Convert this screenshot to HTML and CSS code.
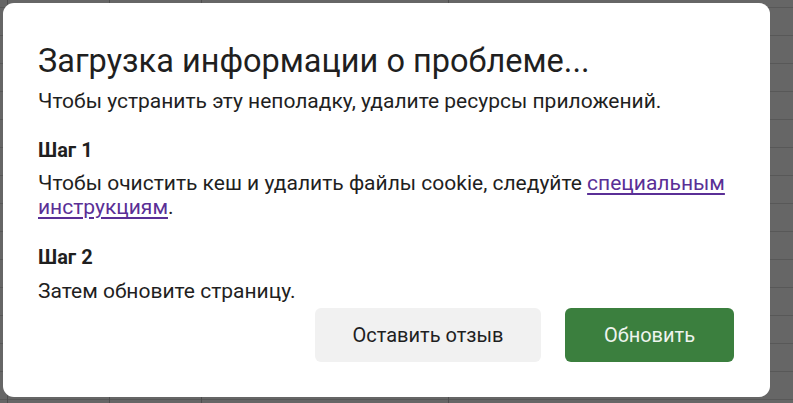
FILE: index.html
```html
<!DOCTYPE html>
<html lang="ru">
<head>
<meta charset="utf-8">
<title>Загрузка информации о проблеме</title>
<link rel="stylesheet" href="styles.css">
</head>
<body>
<div class="dialog">
  <h1 class="title">Загрузка информации о проблеме...</h1>
  <p class="lead">Чтобы устранить эту неполадку, удалите ресурсы приложений.</p>
  <h2 class="step">Шаг 1</h2>
  <p class="text">Чтобы очистить кеш и удалить файлы cookie, следуйте <a class="link" href="#">специальным инструкциям</a>.</p>
  <h2 class="step">Шаг 2</h2>
  <p class="text">Затем обновите страницу.</p>
  <div class="actions">
    <button class="btn btn-secondary">Оставить отзыв</button>
    <button class="btn btn-primary">Обновить</button>
  </div>
</div>
</body>
</html>
```
FILE: styles.css
```css
html, body {
  margin: 0;
  padding: 0;
}
body {
  width: 793px;
  height: 403px;
  overflow: hidden;
  background-color: #666666;
  background-image:
    linear-gradient(90deg, transparent 7px, #4e4e4e 7px, #4e4e4e 8px, transparent 8px),
    linear-gradient(90deg, transparent 109px, #4e4e4e 109px, #4e4e4e 110px, transparent 110px),
    linear-gradient(90deg, transparent 201px, #4e4e4e 201px, #4e4e4e 202px, transparent 202px),
    linear-gradient(90deg, transparent 448px, #4e4e4e 448px, #4e4e4e 449px, transparent 449px),
    repeating-linear-gradient(180deg, transparent 0, transparent 7px, #585858 7px, #585858 8px, transparent 8px, transparent 28px);
  font-family: Roboto, "Liberation Sans", Arial, sans-serif;
  color: #1f1f1f;
}
.dialog {
  box-sizing: border-box;
  margin: 3px 0 0 3px;
  width: 767px;
  height: 394px;
  background: #ffffff;
  border-radius: 11px;
  padding: 38px 36px 35px 35px;
  display: flex;
  flex-direction: column;
}
.title {
  margin: 0 0 8px 0;
  font-size: 32.5px;
  line-height: 40px;
  font-weight: 400;
  color: #1f1f1f;
}
.lead, .text {
  margin: 0;
  font-size: 21px;
  line-height: 24px;
  font-weight: 400;
}
.step {
  margin: 25px 0 9px 0;
  font-size: 20px;
  line-height: 24px;
  font-weight: 700;
}
.text + .step {
  margin-top: 26px;
  margin-bottom: 10px;
}
.link {
  color: #5a2f96;
  text-decoration: underline;
  text-underline-offset: 3px;
}
.actions {
  margin-top: 5px;
  display: flex;
  justify-content: flex-end;
  gap: 24px;
}
.btn {
  height: 54px;
  border: none;
  border-radius: 6px;
  font-family: Roboto, "Liberation Sans", Arial, sans-serif;
  font-size: 20px;
  font-weight: 400;
  padding: 0;
  cursor: pointer;
}
.btn-secondary {
  width: 226px;
  background: #f1f1f1;
  color: #1f1f1f;
}
.btn-primary {
  width: 169px;
  background: #3b7f3e;
  color: #eef4ee;
}
```
